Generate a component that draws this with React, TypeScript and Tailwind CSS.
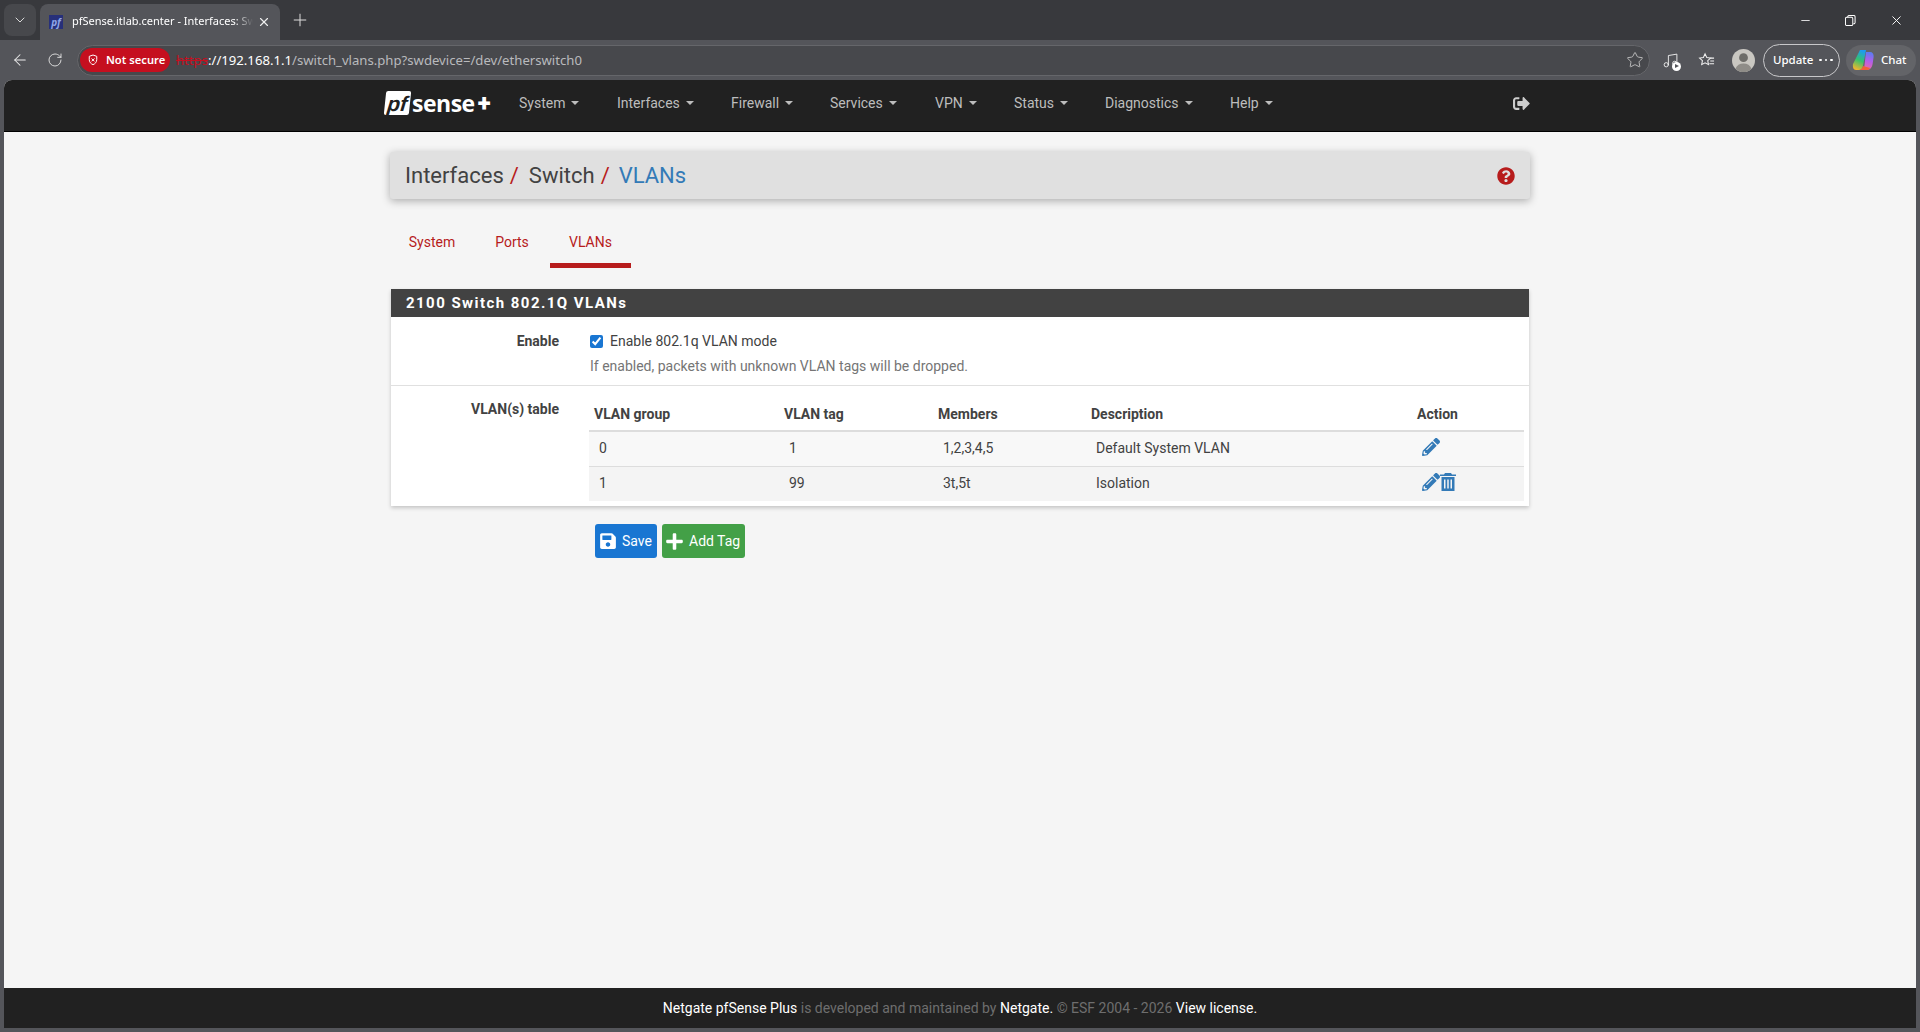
import { ArrowLeft, ChevronDown, Minus, Music, Plus, RotateCw, Star, X } from 'lucide-react';
import { FaPencilAlt, FaPlus, FaQuestionCircle, FaSave, FaSignOutAlt } from 'react-icons/fa';

const menu = [
  { label: 'System', width: 'w-[98px]' },
  { label: 'Interfaces', width: 'w-[114px]' },
  { label: 'Firewall', width: 'w-[99px]' },
  { label: 'Services', width: 'w-[105px]' },
  { label: 'VPN', width: 'w-[79px]' },
  { label: 'Status', width: 'w-[91px]' },
  { label: 'Diagnostics', width: 'w-[125px]' },
  { label: 'Help', width: 'w-[70px]' },
];

const rows = [
  { group: '0', tag: '1', members: '1,2,3,4,5', description: 'Default System VLAN', remove: false, bg: 'bg-[#f8f8f8]' },
  { group: '1', tag: '99', members: '3t,5t', description: 'Isolation', remove: true, bg: 'bg-[#f4f4f4]' },
];

function TrashIcon() {
  return (
    <svg viewBox="0 0 16 18" className="h-[18px] w-4" fill="currentColor">
      <path d="M5 0h6l1 1.500h4v1.500H0V1.500h4z" />
      <path fillRule="evenodd" d="M1.500 4h13v14h-13zM4 6.500V15.500h1.500V6.500zM7.250 6.500V15.500h1.500V6.500zM10.500 6.500V15.500H12V6.500z" />
    </svg>
  );
}

function BrowserChrome() {
  return (
    <div className="font-['Noto_Sans',sans-serif] text-white">
      {/* Tab strip */}
      <div className="flex h-10 items-end bg-[#38393d] pl-1">
        <div className="mb-1 flex h-8 w-8 items-center justify-center rounded-lg bg-[#47484c]">
          <ChevronDown size={16} strokeWidth={1.4} className="text-[#e4e4e4]" />
        </div>
        <div className="ml-1 flex h-9 w-60 items-center rounded-t-lg bg-[#54555a] pl-[9px]">
          <div className="flex h-[14px] w-[14px] items-center justify-center bg-[#27307a] text-[10px] font-bold italic leading-none text-[#8fa6e8]">pf</div>
          <span className="mb-px ml-[9px] w-[181px] overflow-hidden whitespace-nowrap text-[11px] [mask-image:linear-gradient(to_right,black_90%,transparent)]">
            pfSense.itlab.center - Interfaces: Switch
          </span>
          <X size={14} className="ml-1 text-[#eeeeee]" />
        </div>
        <div className="mb-[4px] ml-2 flex h-8 w-6 items-center justify-center">
          <Plus size={20} strokeWidth={1.2} className="text-[#dddddd]" />
        </div>
        <div className="mb-[8px] ml-auto flex h-6 items-center text-white">
          <Minus size={13} strokeWidth={1.5} />
          <svg viewBox="0 0 12 12" className="ml-[33px] h-[11px] w-[11px]" fill="none" stroke="currentColor" strokeWidth="1.1">
            <rect x="0.5" y="2.5" width="8" height="9" rx="1.5" />
            <path d="M3 2.5V2a1.500 1.500 0 0 1 1.500-1.500h5A1.500 1.500 0 0 1 11 2v6a1.500 1.500 0 0 1-2 1.500" />
          </svg>
          <X size={15} strokeWidth={1.5} className="ml-[33px] mr-[16px]" />
        </div>
      </div>

      {/* Address toolbar */}
      <div className="flex h-10 items-center bg-[#54555a]">
        <ArrowLeft size={18} strokeWidth={1.4} className="ml-[11px] text-[#eeeeee]" />
        <RotateCw size={16} strokeWidth={1.4} className="ml-[18px] text-[#e0e0e0]" />
        <div className="ml-[14px] flex h-[31px] w-[1573px] items-center rounded-full border border-[#65666a] bg-[#47484c] pl-[2px]">
          <div className="flex h-[24px] w-[90px] items-center rounded-full bg-[#c50f1f] pl-2 text-[11.2px] font-semibold">
            <svg viewBox="0 0 12 14" className="h-[12px] w-[10px]" fill="none" stroke="white" strokeWidth="1.2">
              <path d="M6 1l4.500 1.600v4c0 3-2 5-4.500 6-2.500-1-4.500-3-4.500-6v-4z" />
              <path d="M4.300 5.200l3.400 3.400M7.700 5.200L4.300 8.600" />
            </svg>
            <span className="ml-2 whitespace-nowrap">Not secure</span>
          </div>
          <div className="ml-[6px] whitespace-nowrap pt-px text-[13.15px] text-[#b9babd]">
            <span className="text-[#c50f1f] line-through">https</span>
            <span className="text-white">://192.168.1.1</span>/switch_vlans.php?swdevice=/dev/etherswitch0
          </div>
          <Star size={18} strokeWidth={1.2} className="ml-auto mr-[5px] text-[#c4c4c4]" />
        </div>
        <div className="relative ml-[12px] h-[17px] w-[17px]">
          <Music size={17} strokeWidth={1.3} className="text-[#f0f0f0]" />
          <div className="absolute -bottom-[2px] -right-[2px] flex h-[9px] w-[9px] items-center justify-center rounded-full bg-white">
            <div className="ml-px h-0 w-0 border-y-[2.5px] border-l-[4px] border-y-transparent border-l-[#54555a]" />
          </div>
        </div>
        <svg viewBox="0 0 18 16" className="ml-[19px] h-[16px] w-[17px]" fill="none" stroke="#f0f0f0" strokeWidth="1.1">
          <path d="M7.500 1.500l1.800 3.900 4 .5-3 2.800.8 4.200-3.600-2-3.600 2 .8-4.200-3-2.800 4-.5z" />
          <path d="M13 6h4M13 9h4M12 12h5" />
        </svg>
        <svg viewBox="0 0 24 24" className="ml-[17px] h-[23px] w-[23px]">
          <circle cx="12" cy="12" r="12" fill="#c9c7c1" />
          <circle cx="12" cy="9" r="4.600" fill="#6e6d69" />
          <path d="M3.600 20.500C5 16.800 8 15 12 15s7 1.800 8.400 5.500A12 12 0 0 1 12 24a12 12 0 0 1-8.400-3.500z" fill="#8f8d88" />
        </svg>
        <div className="ml-2 flex h-[33px] w-[77px] items-center rounded-full border-[1.5px] border-[#c8c8ca] pl-[9px] text-[11.5px] font-medium">
          Update
          <span className="ml-[6px] flex gap-[3px]">
            <i className="h-[2.5px] w-[2.5px] rounded-full bg-white" />
            <i className="h-[2.5px] w-[2.5px] rounded-full bg-white" />
            <i className="h-[2.5px] w-[2.5px] rounded-full bg-white" />
          </span>
        </div>
        <div className="ml-[6px] flex h-[31px] w-[70px] items-center rounded-full bg-[#636468] pl-[6px] text-[11.5px] font-medium">
          <svg viewBox="0 0 22 22" className="h-[22px] w-[22px]">
            <defs>
              <linearGradient id="copilotA" x1="0.6" y1="0" x2="0.3" y2="1">
                <stop offset="0" stopColor="#1e9bf0" />
                <stop offset="0.5" stopColor="#36c26c" />
                <stop offset="1" stopColor="#f4b52e" />
              </linearGradient>
              <linearGradient id="copilotB" x1="0.6" y1="0" x2="0.4" y2="1">
                <stop offset="0" stopColor="#5b7cf2" />
                <stop offset="0.5" stopColor="#b65ee8" />
                <stop offset="1" stopColor="#f06aa0" />
              </linearGradient>
            </defs>
            <path d="M8 1h6l-3 16c-.3 2-1.500 4-4 4H4C1.500 21 .5 18 1 15z" fill="url(#copilotA)" />
            <path d="M14 3h4c2.500 0 4 2 3.600 5l-1 7c-.4 3-2.600 6-5.600 6H9c2 0 3-2 3.400-4z" fill="url(#copilotB)" />
            <path d="M7 21h8c1.500 0 2.500-1 3-2l-7-2c-.6 2-2 4-4 4z" fill="#f0603a" />
          </svg>
          <span className="ml-[7px]">Chat</span>
        </div>
      </div>
    </div>
  );
}

function Logo() {
  return (
    <div className="flex w-[134px] items-center">
      <div className="flex h-[24px] w-[25px] -skew-x-6 items-center justify-center rounded-[2px] bg-white font-['Liberation_Sans',sans-serif] text-[21px] font-bold italic leading-none text-[#212121]">
        pf
      </div>
      <span className="ml-[2px] font-['Open_Sans',sans-serif] text-[23px] font-bold leading-none tracking-[-0.5px] text-white">sense</span>
      <span className="ml-[3px] text-[24px] font-black leading-none text-white">+</span>
    </div>
  );
}

function Navbar() {
  return (
    <nav className="flex h-[52px] shrink-0 justify-center border-b border-black bg-[#212121]">
      <div className="flex w-[1140px] items-center pb-[5px] text-[14px] text-[#bdbdbd]">
        <div className="-ml-[5px]">
          <Logo />
        </div>
        {menu.map((item) => (
          <div key={item.label} className={`flex items-center ${item.width}`}>
            {item.label}
            <span className="ml-[6px] h-0 w-0 border-x-4 border-t-4 border-x-transparent border-t-[#bdbdbd]" />
          </div>
        ))}
        <FaSignOutAlt size={17} className="ml-auto text-[#cccccc]" />
      </div>
    </nav>
  );
}

function VlanTable() {
  return (
    <table className="w-[935px] table-fixed border-collapse text-[14px] text-[#424242]">
      <thead>
        <tr className="h-[45px] border-b-2 border-[#dddddd] text-left font-bold">
          <th className="w-[190px] pl-[5px] pt-[13px]">VLAN group</th>
          <th className="w-[154px] pl-[5px] pt-[13px]">VLAN tag</th>
          <th className="w-[153px] pl-[5px] pt-[13px]">Members</th>
          <th className="w-[326px] pl-[5px] pt-[13px]">Description</th>
          <th className="pl-[5px] pt-[13px]">Action</th>
        </tr>
      </thead>
      <tbody>
        {rows.map((row) => (
          <tr key={row.group} className={`h-[35px] border-b border-[#dddddd] last:border-b-0 ${row.bg}`}>
            <td className="pb-px pl-[10px]">{row.group}</td>
            <td className="pb-px pl-[10px]">{row.tag}</td>
            <td className="pb-px pl-[10px]">{row.members}</td>
            <td className="pb-px pl-[10px]">{row.description}</td>
            <td className="pb-[3px] pl-[10px]">
              <div className="flex items-center text-[#337ab7]">
                <FaPencilAlt size={18} />
                {row.remove && <TrashIcon />}
              </div>
            </td>
          </tr>
        ))}
      </tbody>
    </table>
  );
}

export default function App() {
  return (
    <div className="flex h-screen flex-col overflow-hidden bg-[#54555a]">
      <BrowserChrome />
      <div className="mx-1 mb-1 flex min-h-0 flex-1 flex-col overflow-hidden rounded-t-lg bg-[#f5f5f5] font-['Roboto',sans-serif]">
        <Navbar />

        <main className="flex flex-1 justify-center">
          <div className="w-[1140px]">
            {/* Breadcrumb */}
            <div className="mt-5 flex h-[47px] items-center rounded-[3px] bg-[#e0e0e0] px-[15px] text-[22px] text-[#424242] shadow-[0_2px_8px_rgba(0,0,0,0.3)]">
              <span>Interfaces</span>
              <span className="ml-[6px] text-[#b71c1c]">/</span>
              <span className="ml-[10px]">Switch</span>
              <span className="ml-[6px] text-[#b71c1c]">/</span>
              <span className="ml-[9px] text-[#337ab7]">VLANs</span>
              <FaQuestionCircle size={18} className="ml-auto text-[#b71c1c]" />
            </div>

            {/* Tabs */}
            <div className="mt-[19px] flex h-[50px] items-stretch text-[14px] text-[#b71c1c]">
              <div className="flex w-[84px] items-center justify-center pb-[1px]">System</div>
              <div className="ml-[-1px] flex w-[78px] items-center justify-center pb-[1px]">Ports</div>
              <div className="ml-[-1px] flex w-[81px] items-center justify-center border-b-[5px] border-[#b71c1c] pt-1">VLANs</div>
            </div>

            {/* Panel */}
            <section className="ml-px mt-[21px] w-[1138px] bg-white shadow-[0_2px_4px_rgba(0,0,0,0.2)]">
              <h2 className="flex h-[28px] items-center bg-[#424242] pl-[15px] text-[15px] font-bold tracking-[1.45px] text-white">
                2100 Switch 802.1Q VLANs
              </h2>
              <div className="flex h-[69px] border-b border-[#e0e0e0] text-[14px]">
                <div className="w-[168px] pt-[16px] text-right font-bold leading-[16px] text-[#424242]">Enable</div>
                <div className="ml-[31px] pt-[16px]">
                  <label className="flex h-4 items-center text-[#424242]">
                    <input type="checkbox" checked readOnly className="m-0 h-[13px] w-[13px] accent-[#1976d2]" />
                    <span className="ml-[7px]">Enable 802.1q VLAN mode</span>
                  </label>
                  <p className="mt-[9px] leading-4 text-[#757575]">If enabled, packets with unknown VLAN tags will be dropped.</p>
                </div>
              </div>
              <div className="flex h-[120px] text-[14px]">
                <div className="w-[168px] pt-[15px] text-right font-bold leading-4 text-[#424242]">VLAN(s) table</div>
                <div className="ml-[30px]">
                  <VlanTable />
                </div>
              </div>
            </section>

            {/* Buttons */}
            <div className="ml-[205px] mt-[18px] flex gap-[5px] text-[14px] text-white">
              <button className="flex h-[34px] w-[62px] items-center rounded-[3px] bg-[#1976d2] pl-1">
                <FaSave size={18} />
                <span className="ml-[5px]">Save</span>
              </button>
              <button className="flex h-[34px] w-[83px] items-center rounded-[3px] bg-[#43a047] pl-[3px]">
                <FaPlus size={19} />
                <span className="ml-[5px]">Add Tag</span>
              </button>
            </div>
          </div>
        </main>

        <footer className="flex h-10 shrink-0 items-center justify-center bg-[#212121] text-[14px] text-[#6e6e6e]">
          <p>
            <span className="text-white">Netgate pfSense Plus</span> is developed and maintained by{' '}
            <span className="text-white">Netgate.</span> © ESF 2004 - 2026 <span className="text-white">View license.</span>
          </p>
        </footer>
      </div>
    </div>
  );
}
